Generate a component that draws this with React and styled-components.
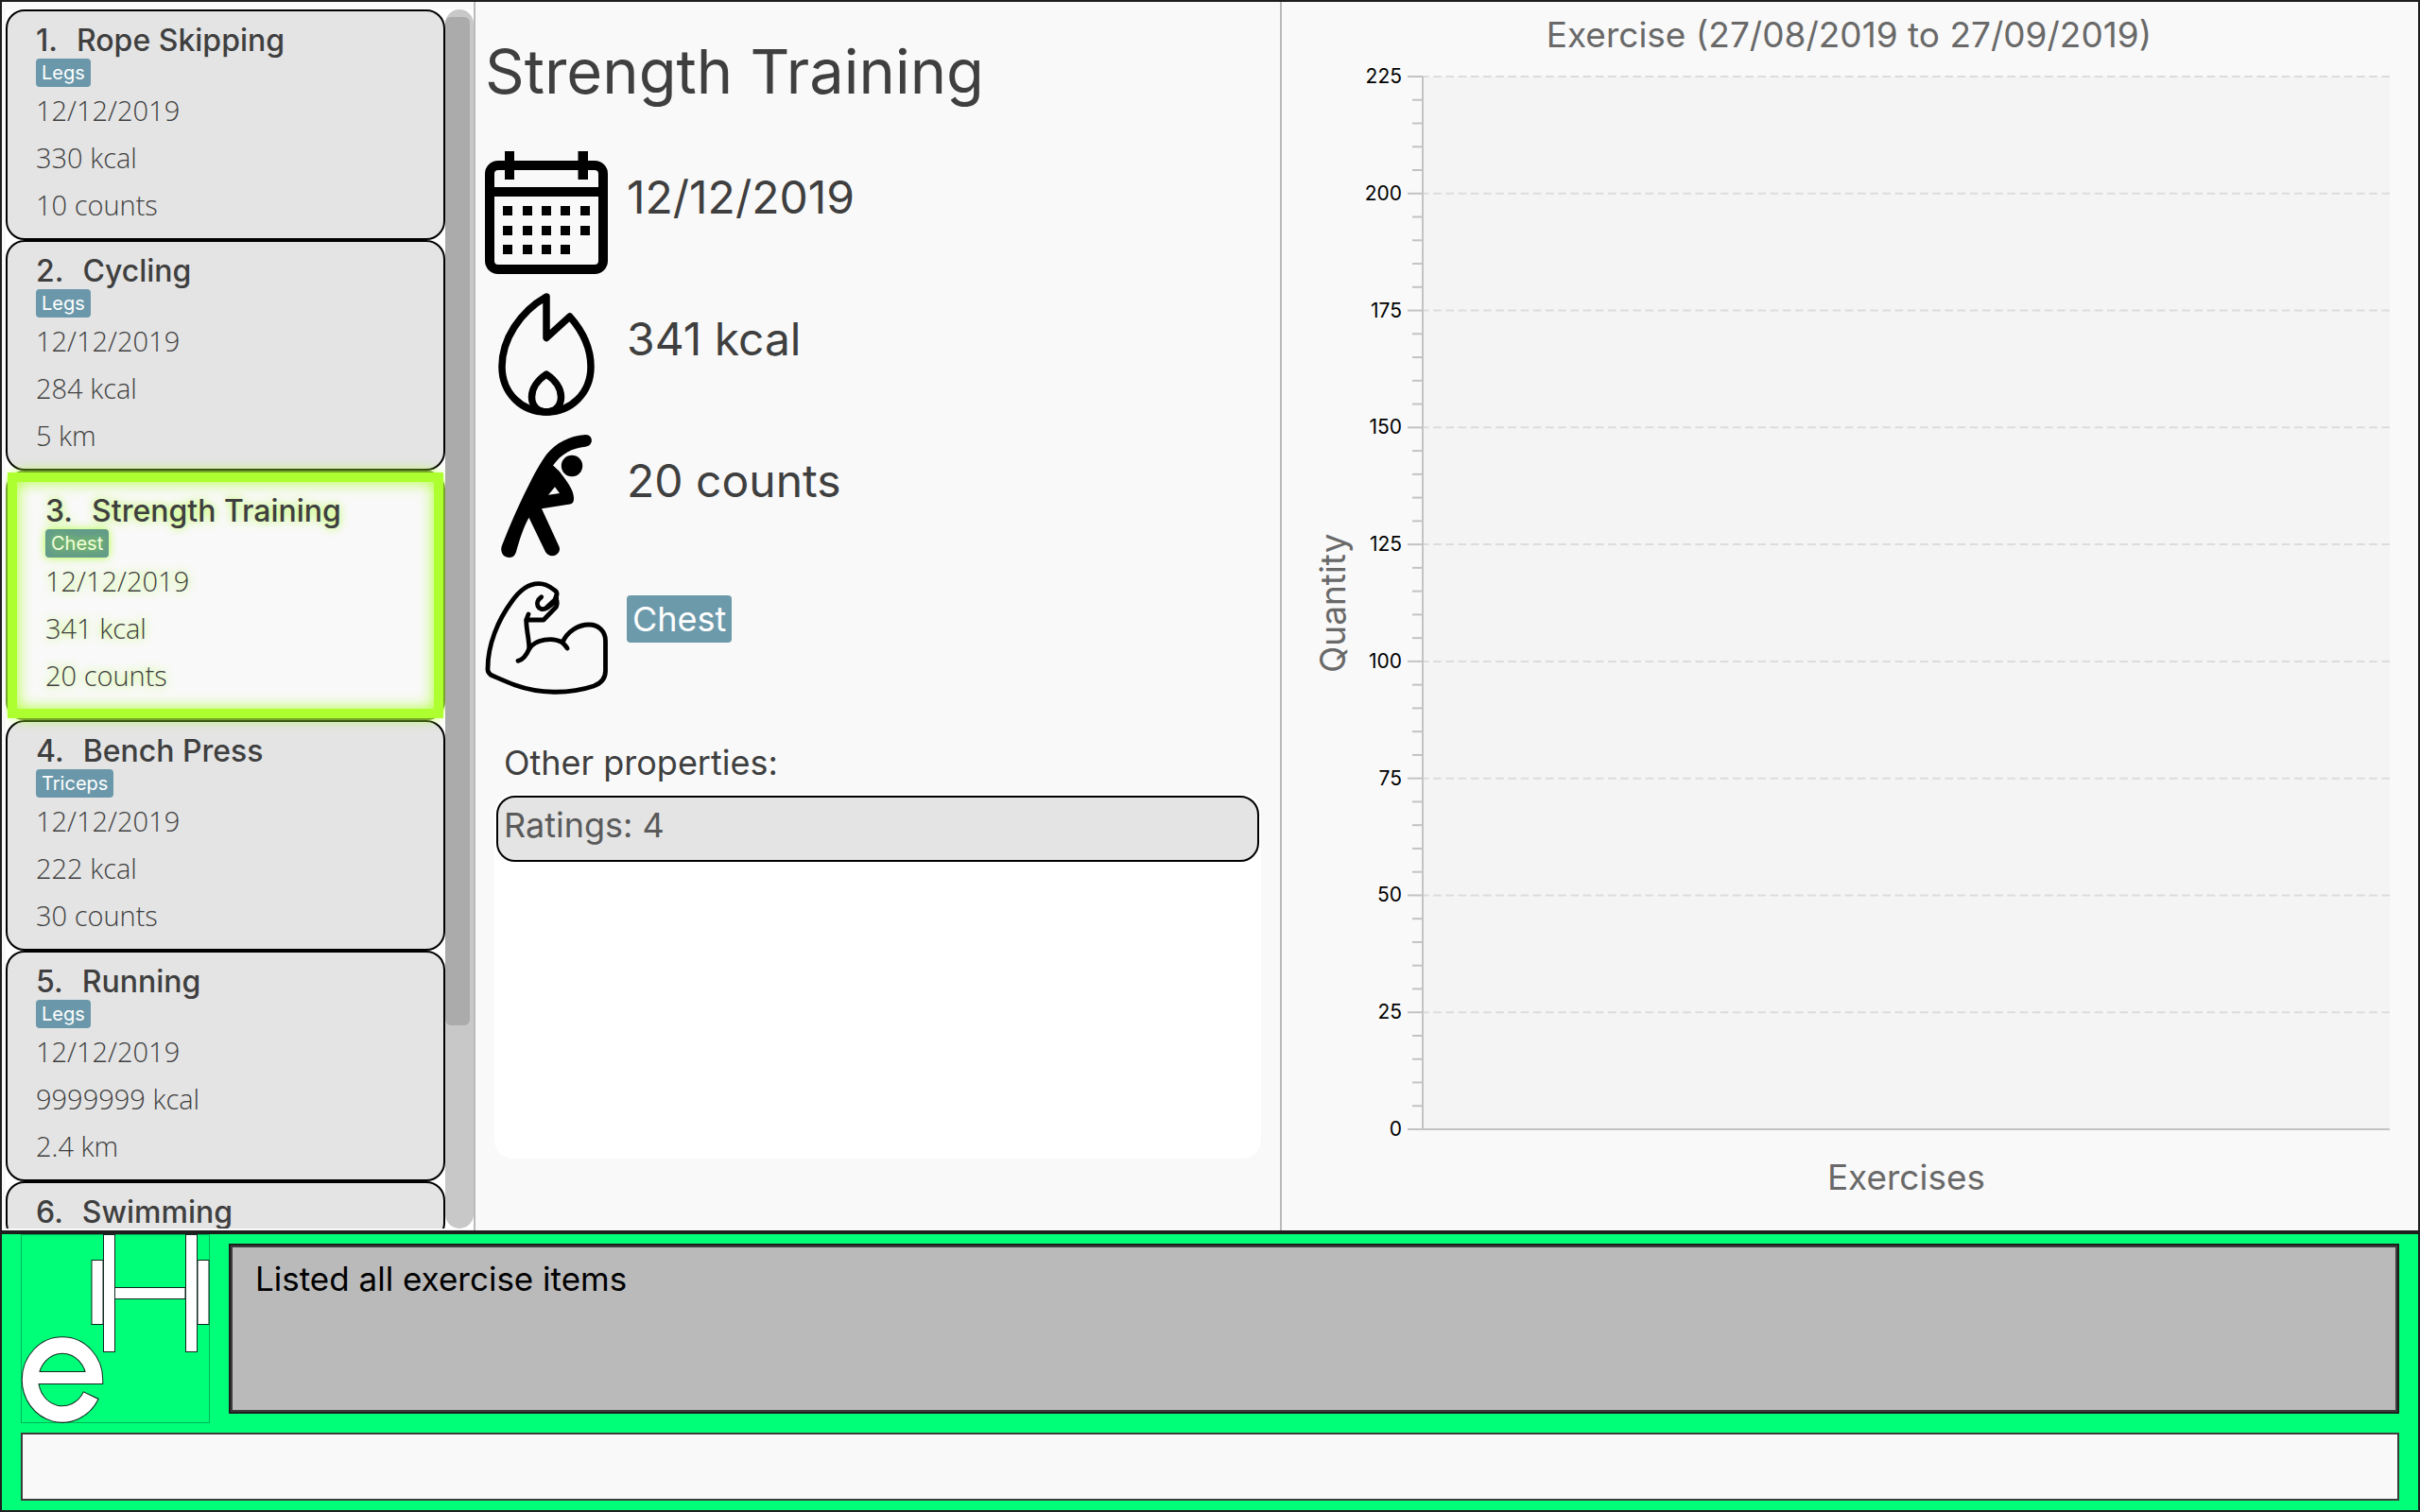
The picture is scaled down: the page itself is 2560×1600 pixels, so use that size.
import React from "react";
import styled, { createGlobalStyle, css } from "styled-components";

const GlobalStyle = createGlobalStyle`
  *, *::before, *::after { box-sizing: border-box; }
  body { margin: 0; background: #f9f9f9; color: #3f3f3f; font-family: Inter, "Liberation Sans", sans-serif; }
  h1, h2, p, ul, ol { margin: 0; padding: 0; font-weight: 400; }
  ul, ol { list-style: none; }
`;

const Window = styled.div`
  display: flex;
  flex-direction: column;
  height: 100vh;
  border: 2px solid #1e1e1e;
  background: #f9f9f9;
`;

const Main = styled.main`
  flex: 1;
  min-height: 0;
  display: grid;
  grid-template-columns: 501fr 853fr 1202fr;
`;

/* ---------- exercise list ---------- */

const ListPane = styled.section`
  display: flex;
  min-height: 0;
  margin: 8px 0 2px 4px;
  background: #fff;
`;

const Divided = styled.div`
  display: flex;
  flex-direction: column;
  min-width: 0;
  min-height: 0;
  border-right: 2px solid #bababa;
`;

const Cards = styled.ol`
  flex: 1;
  min-width: 0;
  overflow: hidden;
`;

const Card = styled.li`
  padding: 12px 30px 10px;
  border: 2px solid #000;
  border-radius: 20px;
  background: #e4e4e4;
  ${(p) =>
    p.$selected &&
    css`
      position: relative;
      padding: 0;
      border-color: #76a52b;
      background: #76a52b;
      box-shadow: 0 0 12px rgba(173, 255, 47, 0.8);
      text-shadow: 0 0 10px rgba(173, 255, 47, 0.9);
    `}
`;

const Highlight = styled.div`
  padding: 12px 30px 10px;
  border: 10px solid #adff2f;
  background: #f9f9f9;
  box-shadow: inset 0 0 16px #adff2f;
`;

const CardTitle = styled.h2`
  display: flex;
  gap: 20px;
  font-size: 32px;
  line-height: 38px;
  font-weight: 500;
  white-space: nowrap;
`;

const Tag = styled.span`
  display: block;
  width: fit-content;
  padding: 0 6px;
  border-radius: 4px;
  background: #6a98aa;
  color: #fff;
  font-size: 20px;
  line-height: 30px;
  ${(p) =>
    p.$glow &&
    css`
      background: #629b8b;
      color: #f2ffdc;
      box-shadow: 0 0 10px rgba(173, 255, 47, 0.9);
    `}
  ${(p) =>
    p.$large &&
    css`
      margin-top: 20px;
      background: #6d9aab;
      font-size: 36px;
      line-height: 50px;
    `}
`;

const CardLine = styled.p`
  font-family: "Open Sans", "Noto Sans", sans-serif;
  font-weight: 300;
  font-size: 29px;
  line-height: 50px;
`;

const ScrollTrack = styled.div`
  width: 30px;
  padding: 8px 4px 0 0;
  border-radius: 15px;
  background: #c8c8c8;
`;

const ScrollThumb = styled.div`
  height: 83.2%;
  border-radius: 6px;
  background: #ababab;
`;

/* ---------- exercise details ---------- */

const Detail = styled.section`
  display: flex;
  flex-direction: column;
  padding: 34px 20px 0 10px;
`;

const DetailTitle = styled.h1`
  margin-bottom: 44px;
  font-size: 65px;
  line-height: 80px;
`;

const Facts = styled.ul`
  display: grid;
  gap: 20px;
`;

const Fact = styled.li`
  display: flex;
  gap: 20px;
  font-size: 48px;
  line-height: 98px;
`;

const Icon = styled.svg`
  flex: none;
  width: 130px;
  height: 130px;
`;

const OtherLabel = styled.h2`
  padding-left: 20px;
  margin: 42px 0 8px;
  font-size: 36px;
  line-height: 50px;
`;

const Properties = styled.ul`
  height: 386px;
  margin-left: 10px;
  padding: 2px;
  border-radius: 20px;
  background: #fff;
`;

const Property = styled.li`
  height: 70px;
  padding: 4px 6px;
  border: 2px solid #000;
  border-radius: 20px;
  background: #e4e4e4;
  color: #5a5a5a;
  font-size: 36px;
  line-height: 50px;
`;

/* ---------- chart ---------- */

const ChartPane = styled.section`
  display: grid;
  grid-template: 79px 1fr auto / 44px 1fr;
  column-gap: 73px;
  padding: 0 30px 31px 32px;
  color: #696969;
  font-size: 37px;
  line-height: 50px;
  text-align: center;
`;

const ChartTitle = styled.h2`
  grid-column: 1 / -1;
  padding: 10px 4px 0 0;
  font-size: inherit;
`;

const ValueTitle = styled.p`
  writing-mode: vertical-rl;
  transform: rotate(180deg);
  line-height: 44px;
`;

const CategoryTitle = styled.p`
  grid-column: 2;
  padding-top: 26px;
`;

const Plot = styled.svg`
  width: 100%;
  height: 100%;
  min-height: 0;
  overflow: visible;
  text {
    fill: #000;
    font-size: 21px;
    text-anchor: end;
  }
`;

/* ---------- command area ---------- */

const Console = styled.footer`
  padding: 0 20px 10px;
  border-top: 4px solid #1e1e1e;
  background: #00ff78;
`;

const ConsoleRow = styled.div`
  display: flex;
  gap: 20px;
  margin-bottom: 10px;
`;

const Logo = styled.svg`
  flex: none;
  width: 200px;
  height: 200px;
`;

const Result = styled.output`
  flex: 1;
  margin: 10px 0;
  padding: 10px 26px;
  border: 2px solid #1e1e1e;
  box-shadow: inset 0 0 0 2px #3c3c3c;
  background: #bababa;
  color: #000;
  font-size: 35px;
  line-height: 50px;
`;

const CommandBox = styled.input`
  display: block;
  width: 100%;
  height: 72px;
  padding: 0 20px;
  border: 2px solid #3c3c3c;
  border-radius: 0;
  outline: none;
  background: #f9f9f9;
  color: #000;
  font: 35px Inter, sans-serif;
`;

const exercises = [
  { name: "Rope Skipping", muscle: "Legs", date: "12/12/2019", calories: "330 kcal", quantity: "10 counts" },
  { name: "Cycling", muscle: "Legs", date: "12/12/2019", calories: "284 kcal", quantity: "5 km" },
  { name: "Strength Training", muscle: "Chest", date: "12/12/2019", calories: "341 kcal", quantity: "20 counts" },
  { name: "Bench Press", muscle: "Triceps", date: "12/12/2019", calories: "222 kcal", quantity: "30 counts" },
  { name: "Running", muscle: "Legs", date: "12/12/2019", calories: "9999999 kcal", quantity: "2.4 km" },
  { name: "Swimming" },
];
const selectedIndex = 2;

function ExerciseCard({ index, exercise, selected }) {
  const body = (
    <>
      <CardTitle>
        <span>{index + 1}.</span>
        <span>{exercise.name}</span>
      </CardTitle>
      {exercise.muscle && (
        <>
          <Tag $glow={selected}>{exercise.muscle}</Tag>
          <CardLine>{exercise.date}</CardLine>
          <CardLine>{exercise.calories}</CardLine>
          <CardLine>{exercise.quantity}</CardLine>
        </>
      )}
    </>
  );
  return <Card $selected={selected}>{selected ? <Highlight>{body}</Highlight> : body}</Card>;
}

function CalendarIcon() {
  const columns = [19, 40, 60, 80, 101];
  const rows = [58, 79, 99];
  return (
    <Icon viewBox="0 0 130 130" aria-hidden="true">
      <rect x="5" y="15" width="120" height="110" rx="9" fill="none" stroke="#000" strokeWidth="10" />
      <path d="M5 38h120v10H5zM21 0h10v30H21zM98.500 0h10.500v30H98.500z" />
      {rows.map((y, r) =>
        columns
          .slice(0, r === 2 ? 4 : 5)
          .map((x) => <rect key={`${x}-${y}`} x={x} y={y} width="10" height="10" />)
      )}
    </Icon>
  );
}

function FlameIcon() {
  return (
    <Icon viewBox="0 0 130 130" aria-hidden="true" fill="none" stroke="#000" strokeWidth="7.5" strokeLinejoin="round">
      <path d="M65 4C37 20 18 49 18 78C18 106 39 126 65 126C91 126 112 106 112 78C112 59 103 40 89.700 25L65 47.500Z" />
      <path d="M65 86C56 92 49.500 101 49.500 110C49.500 120 56 126 65 126C74 126 80.500 120 80.500 110C80.500 101 74 92 65 86Z" />
    </Icon>
  );
}

function StretchIcon() {
  return (
    <Icon viewBox="0 0 130 130" aria-hidden="true">
      <circle cx="92" cy="33" r="11.200" />
      <path
        fillRule="evenodd"
        d="M106.500 0C89 1 75 9 65 21C52 39 33 79 17.700 118C16 124 19 130 26 130C30 130 32 127 33 124C37 110 41 97 46.500 87.700L64 124C70 133 82 126 78.300 118L60 78.300L90 73.500C93 73 94 71 94 67C94 57 83 45 79 39L72 32.500C81 20 92 14 106.500 12.700C115 12 115 0 106.500 0ZM74 55.300L67 63.700L79 62Z"
      />
    </Icon>
  );
}

function ArmIcon() {
  return (
    <Icon
      viewBox="0 0 130 130"
      aria-hidden="true"
      fill="none"
      stroke="#000"
      strokeWidth="4.800"
      strokeLinecap="round"
      strokeLinejoin="round"
    >
      <path d="M82 70C87 58 99 51 110 51C120 51 127.500 58 127.500 68V100C127.500 108 123 113 115 116C88 125 57 124 32 115C24 112 15 108 8 105C4 103 2.500 101 3 97C3 72 14 46 28 27C35 17 45 7.500 57 7.700C66 7.500 71 13 75 15.500C77 18 76 20 74.500 23C76 25 77 28 75.500 32L62 46H44" />
      <path d="M46 40L43.700 46C43.700 57 47 67 46.700 76.700C44 83 41 88 35 89.300" />
      <path d="M46.700 76.700C53 66 72 64 82 70C84 72 86 74 87 76" />
      <path d="M59.700 21.700C51 28 57 37 64 34L75.700 23" />
      <path d="M66 33L74 27" />
    </Icon>
  );
}

function AppLogo() {
  return (
    <Logo viewBox="0 0 200 200" role="img" aria-label="eH">
      <rect x="0.500" y="0.500" width="199" height="199" fill="none" stroke="#00b35a" />
      <g fill="#fff" stroke="#102820">
        <rect x="75" y="27.500" width="12" height="68" />
        <rect x="187" y="27.500" width="12" height="68" />
        <rect x="99" y="56.500" width="75" height="12" />
        <rect x="87.500" y="0.500" width="12" height="124" />
        <rect x="174.500" y="0.500" width="12" height="124" />
      </g>
      <g fill="none" stroke="#102820">
        <path d="M78 159V154A34 36.500 0 0 0 10 154A34 36.500 0 0 0 74.500 170.200" strokeWidth="18.500" />
        <path d="M12 152H80" strokeWidth="14" />
      </g>
      <g fill="none" stroke="#fff">
        <path d="M78 158V154A34 36.500 0 0 0 10 154A34 36.500 0 0 0 74 171.200" strokeWidth="16.500" />
        <path d="M12 152H80" strokeWidth="12" />
      </g>
    </Logo>
  );
}

const maximum = 225;
const majorStep = 25;
const minorStep = 5;

function ValuePlot() {
  const ticks = [];
  for (let value = 0; value <= maximum; value += minorStep) {
    ticks.push({ value, y: `${100 - (value / maximum) * 100}%`, major: value % majorStep === 0 });
  }
  const majors = ticks.filter((t) => t.major);
  return (
    <Plot>
      <rect width="100%" height="100%" fill="#f4f4f4" />
      {majors
        .filter((t) => t.value > 0)
        .map((t) => (
          <line
            key={t.value}
            x1="0"
            x2="100%"
            y1={t.y}
            y2={t.y}
            stroke="#dcdcdc"
            strokeWidth="2"
            strokeDasharray="8.600 4.600"
            strokeDashoffset="2"
          />
        ))}
      {ticks.map((t) => (
        <line key={t.value} x1={t.major ? -16 : -11} x2="0" y1={t.y} y2={t.y} stroke="#c3c3c3" strokeWidth="2" />
      ))}
      <line x1="0" x2="0" y1="0" y2="100%" stroke="#c3c3c3" strokeWidth="2" />
      <line x1="0" x2="100%" y1="100%" y2="100%" stroke="#c3c3c3" strokeWidth="2" />
      {majors.map((t) => (
        <text key={t.value} x="-22" y={t.y} dy="7">
          {t.value}
        </text>
      ))}
    </Plot>
  );
}

export default function App() {
  const current = exercises[selectedIndex];
  return (
    <Window>
      <GlobalStyle />
      <Main>
        <Divided>
          <ListPane>
            <Cards>
              {exercises.map((exercise, i) => (
                <ExerciseCard key={exercise.name} index={i} exercise={exercise} selected={i === selectedIndex} />
              ))}
            </Cards>
            <ScrollTrack>
              <ScrollThumb />
            </ScrollTrack>
          </ListPane>
        </Divided>

        <Divided>
          <Detail>
            <DetailTitle>{current.name}</DetailTitle>
            <Facts>
              <Fact>
                <CalendarIcon />
                {current.date}
              </Fact>
              <Fact>
                <FlameIcon />
                {current.calories}
              </Fact>
              <Fact>
                <StretchIcon />
                {current.quantity}
              </Fact>
              <Fact>
                <ArmIcon />
                <div>
                  <Tag $large>{current.muscle}</Tag>
                </div>
              </Fact>
            </Facts>
            <OtherLabel>Other properties:</OtherLabel>
            <Properties>
              <Property>Ratings: 4</Property>
            </Properties>
          </Detail>
        </Divided>

        <ChartPane>
          <ChartTitle>Exercise (27/08/2019 to 27/09/2019)</ChartTitle>
          <ValueTitle>Quantity</ValueTitle>
          <ValuePlot />
          <CategoryTitle>Exercises</CategoryTitle>
        </ChartPane>
      </Main>

      <Console>
        <ConsoleRow>
          <AppLogo />
          <Result>Listed all exercise items</Result>
        </ConsoleRow>
        <CommandBox type="text" aria-label="Command" />
      </Console>
    </Window>
  );
}
